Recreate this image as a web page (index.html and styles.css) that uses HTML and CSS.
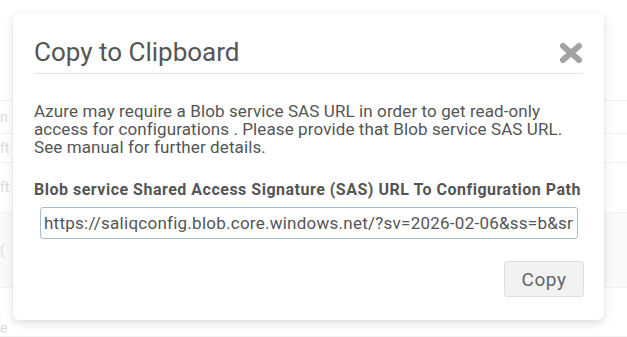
FILE: index.html
```html
<!DOCTYPE html>
<html>
<head>
<meta charset="utf-8">
<link rel="stylesheet" href="styles.css">
</head>
<body>
<div class="page">
  <div class="row row-top"></div>
  <div class="row row-a"><span class="frag">n</span></div>
  <div class="row row-b"><span class="frag">ft</span></div>
  <div class="row row-c"><span class="frag">ft</span></div>
  <div class="row row-d"><span class="frag">(</span></div>
  <div class="row row-e"><span class="frag">e</span></div>
</div>
<div class="modal">
  <div class="modal-header">
    <h1 class="modal-title">Copy to Clipboard</h1>
    <svg class="close" width="24" height="22" viewBox="0 0 24 22">
      <path d="M4 4 L20 18 M20 4 L4 18" stroke="#a3a3a3" stroke-width="6" stroke-linecap="round"/>
    </svg>
  </div>
  <p class="desc">Azure may require a Blob service SAS URL in order to get read-only access for configurations . Please provide that Blob service SAS URL. See manual for further details.</p>
  <div class="label">Blob service Shared Access Signature (SAS) URL To Configuration Path</div>
  <input class="url" type="text" value="https://saliqconfig.blob.core.windows.net/?sv=2026-02-06&amp;ss=b&amp;srt=sco&amp;sp=rl&amp;se=2027">
  <div class="footer">
    <button class="copy">Copy</button>
  </div>
</div>
</body>
</html>
```
FILE: styles.css
```css
html, body {
  margin: 0;
  padding: 0;
  background: #fff;
  font-family: Roboto, "Liberation Sans", sans-serif;
}
.page {
  width: 627px;
  height: 337px;
  overflow: hidden;
  display: flex;
  flex-direction: column;
}
.row {
  border-bottom: 1px solid #f1f1f1;
  color: #dcdcdc;
  font-size: 14px;
  display: flex;
  align-items: center;
}
.row-top { height: 102px; }
.row-a { height: 32px; }
.row-b { height: 28px; }
.row-c { height: 50px; }
.row-d { height: 75px; background: #fafafa; }
.row-e { height: 49px; align-items: flex-end; }
.frag { margin-left: 0; }
.modal {
  position: absolute;
  left: 13px;
  top: 13px;
  width: 591px;
  height: 307px;
  box-sizing: border-box;
  padding: 0 21px;
  background: #fff;
  border-radius: 6px;
  box-shadow: 0 3px 10px rgba(0,0,0,0.13), 0 0 2px rgba(0,0,0,0.06);
}
.modal-header {
  display: flex;
  justify-content: space-between;
  align-items: flex-start;
  padding: 25px 0 7px;
  border-bottom: 1px solid #e3e6e8;
}
.modal-title {
  margin: 0;
  font-weight: 400;
  font-size: 26px;
  line-height: 28px;
  color: #555;
}
.close {
  margin-top: 4px;
}
.desc {
  margin: 28px 0 0;
  font-size: 17px;
  letter-spacing: 0.1px;
  line-height: 18px;
  color: #555;
}
.label {
  margin-top: 25px;
  font-size: 16px;
  letter-spacing: 0.5px;
  line-height: 18px;
  font-weight: 700;
  color: #555;
  white-space: nowrap;
}
.url {
  display: block;
  margin: 8px 0 0 6px;
  width: 538px;
  height: 32px;
  box-sizing: border-box;
  padding: 0 3px;
  border: 1px solid #a9bccf;
  border-radius: 3px;
  font-family: Roboto, "Liberation Sans", sans-serif;
  font-size: 17px;
  letter-spacing: 0.25px;
  color: #555;
  outline: none;
}
.footer {
  display: flex;
  justify-content: flex-end;
  margin-top: 22px;
}
.copy {
  width: 80px;
  height: 36px;
  margin-right: -1px;
  background: #f2f2f2;
  border: 1px solid #dedede;
  border-radius: 3px;
  font-family: Roboto, "Liberation Sans", sans-serif;
  font-size: 19px;
  letter-spacing: 0.5px;
  color: #666;
}
```
